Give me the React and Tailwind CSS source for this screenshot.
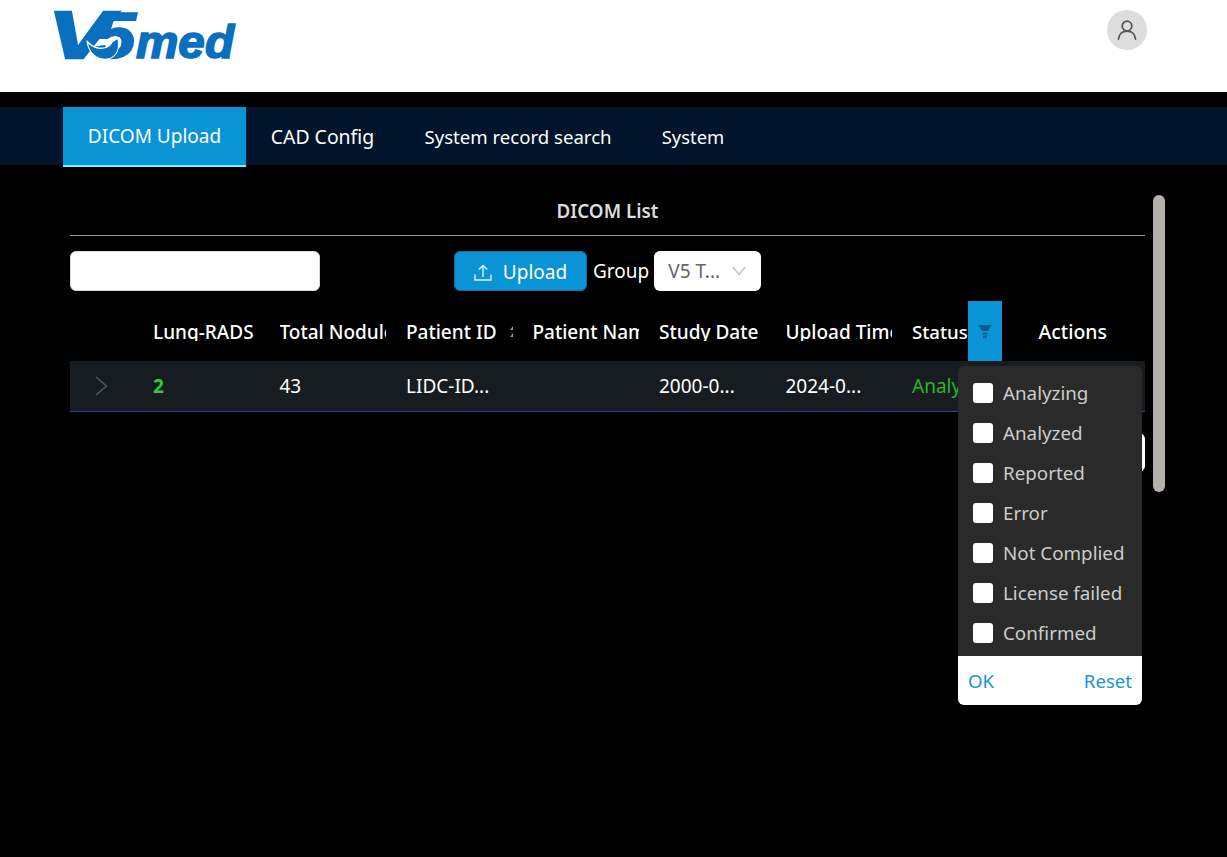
import React from 'react';

const FONT = "font-['Noto_Sans','Open_Sans',sans-serif]";

const columns = [
  { title: 'Lung-RADS' },
  { title: 'Total Nodule Count' },
  { title: 'Patient ID', sorter: true },
  { title: 'Patient Name' },
  { title: 'Study Date' },
  { title: 'Upload Time' },
];

const statusOptions = ['Analyzing', 'Analyzed', 'Reported', 'Error', 'Not Complied', 'License failed', 'Confirmed'];

function Logo() {
  return (
    <svg width="190" height="56" viewBox="0 0 190 56" className="block overflow-visible" aria-label="V5med">
      <g fill="#0a6fbe" stroke="#0a6fbe" fontFamily="Liberation Sans" fontWeight="700" fontStyle="italic">
        <text x="-4" y="48" fontSize="66" strokeWidth="2.5" textLength="64" lengthAdjust="spacingAndGlyphs">V</text>
        <text x="41" y="48" fontSize="64" strokeWidth="1.5" textLength="43" lengthAdjust="spacingAndGlyphs">5</text>
        <text x="84" y="48" fontSize="46" strokeWidth="1.6" textLength="98" lengthAdjust="spacingAndGlyphs">med</text>
      </g>
      <path d="M35 31 C37 45 47 51 57 49 C65 46 68 38 66 28 L60 32 C58 37 52 39 46 38 C41 37 38 35 35 31Z" fill="#0a6fbe" stroke="#fff" strokeWidth="1.3" />
    </svg>
  );
}

function Avatar() {
  return (
    <div className="w-10 h-10 rounded-full bg-[#dddddd] flex items-center justify-center">
      <svg width="22" height="22" viewBox="0 0 22 22" fill="none" stroke="#555555" strokeWidth="1.8" strokeLinecap="round">
        <circle cx="11" cy="7" r="4.8" />
        <path d="M2.5 20 C3 15 6.5 12 11 12 C15.5 12 19 15 19.5 20" />
      </svg>
    </div>
  );
}

function FilterIcon() {
  return (
    <svg width="14" height="13" viewBox="0 0 14 13" fill="#0d5f8f">
      <path d="M0 0H14L10 6H4Z" />
      <path d="M4.5 7.5H9.5V9.5H4.5Z" />
      <path d="M5 10.5H9V13H5Z" />
    </svg>
  );
}

function UploadIcon() {
  return (
    <svg width="18" height="17" viewBox="0 0 18 17" fill="none" stroke="#dff3fb" strokeWidth="1.4">
      <path d="M1 10.5V16H17V10.5" />
      <path d="M9 13V1.5M4.8 5.6L9 1.4L13.2 5.6" />
    </svg>
  );
}

function HeaderCell({ title, sorter }) {
  return (
    <div className="w-[126.5px] shrink-0 px-[10px] flex items-center">
      <div className="flex-1 h-[20px] overflow-hidden whitespace-nowrap font-medium text-white text-[19px] leading-[23px] relative">
        {sorter ? (
          <>
            {title}
            <svg width="4" height="11" viewBox="0 0 4 11" fill="#999999" className="absolute right-0 top-[5px]">
              <path d="M4 0V4H1Z" />
              <path d="M4 7V11H1Z" />
            </svg>
          </>
        ) : (
          title
        )}
      </div>
    </div>
  );
}

function FilterMenu() {
  return (
    <div className="absolute left-[958px] top-[366px] w-[184px] rounded-md overflow-hidden z-10">
      <div className="bg-[#2a2a2a] h-[290px] pt-[7px]">
        {statusOptions.map((label) => (
          <div key={label} className="h-10 flex items-center pl-[15px] gap-[10px]">
            <span className="w-5 h-5 rounded-[3px] bg-white" />
            <span className="text-[#cccccc] text-[18.8px]">{label}</span>
          </div>
        ))}
      </div>
      <div className="bg-white h-[49px] px-[10px] flex items-center justify-between text-[#1a94d8] text-[18.6px]">
        <span>OK</span>
        <span>Reset</span>
      </div>
    </div>
  );
}

export default function App() {
  return (
    <div className={`relative w-full h-[857px] bg-black overflow-hidden ${FONT}`}>
      <header className="h-[92px] bg-white pl-[52px] pr-[80px] pt-[10px] flex justify-between items-start">
        <Logo />
        <Avatar />
      </header>

      <nav className="mt-[15px] h-[58px] bg-[#00152b] pl-[63px] flex items-start text-white">
        <a className="w-[183px] h-[60px] flex items-center justify-center text-[19px] bg-[#0a94d6] border-b-2 border-[#7ff0f8]">DICOM Upload</a>
        <a className="w-[153px] h-[60px] flex items-center justify-center text-[19.4px]">CAD Config</a>
        <a className="w-[238px] h-[60px] flex items-center justify-center text-[18.6px]">System record search</a>
        <a className="w-[112px] h-[60px] flex items-center justify-center text-[18.4px]">System</a>
      </nav>

      <div className="pl-[70px] pt-[30px] flex items-start">
        <main className="w-[1075px]">
          <h2 className="h-[41px] border-b border-[#999999] text-center text-[#dddddd] font-semibold text-[18.8px] leading-[32px]">DICOM List</h2>

          <div className="mt-[15px] flex items-center h-10">
            <input className="w-[250px] h-10 rounded-md bg-white border border-[#d9d9d9]" />
            <button className="ml-[134px] w-[133px] h-10 rounded-md bg-[#0a94d6] border border-[#17699a] text-white text-[19px] flex items-center justify-center gap-[11px] pt-[2px]">
              <UploadIcon />
              Upload
            </button>
            <span className="ml-[6px] text-white text-[19px]">Group</span>
            <div className="ml-[5px] w-[107px] h-10 rounded-md bg-white text-[#666666] text-[19px] flex items-center justify-between pl-[14px] pr-[15px]">
              <span>V5 T...</span>
              <svg width="14" height="10" viewBox="0 0 14 10" fill="none" stroke="#bbbbbb" strokeWidth="1.2">
                <path d="M0.7 1L7 8.5L13.3 1" />
              </svg>
            </div>
          </div>

          <div className="mt-[10px] h-[60px] flex">
            <div className="w-[73px] shrink-0" />
            {columns.map((c) => (
              <HeaderCell key={c.title} title={c.title} sorter={c.sorter} />
            ))}
            <div className="w-[126.5px] shrink-0 pl-[10px] flex items-center">
              <span className="font-medium text-white text-[18.6px] pt-[2px]">Status</span>
              <div className="ml-auto w-[35px] h-full bg-[#0a94d6] flex items-center justify-center mr-[27px]">
                <FilterIcon />
              </div>
            </div>
            <div className="flex-1 pl-[10px] pt-[2px] flex items-center font-medium text-white text-[19.4px]">Actions</div>
          </div>

          <div className="h-[51px] bg-[#161c20] border-b border-[#3c3f8f] flex items-center text-white text-[19px]">
            <div className="w-[73px] shrink-0 pl-[25px]">
              <svg width="13" height="20" viewBox="0 0 13 20" fill="none" stroke="#555555" strokeWidth="1.6">
                <path d="M1 1L11.5 10L1 19" />
              </svg>
            </div>
            <div className="w-[126.5px] shrink-0 px-[10px] font-bold text-[#2ecc40]">2</div>
            <div className="w-[126.5px] shrink-0 px-[10px]">43</div>
            <div className="w-[126.5px] shrink-0 px-[10px]">LIDC-ID...</div>
            <div className="w-[126.5px] shrink-0 px-[10px]" />
            <div className="w-[126.5px] shrink-0 px-[10px]">2000-0...</div>
            <div className="w-[126.5px] shrink-0 px-[10px]">2024-0...</div>
            <div className="w-[126.5px] shrink-0 px-[10px] text-[#2bb52b]">Analyzed</div>
          </div>

          <div className="mt-[21px] flex justify-end">
            <div className="w-10 h-[39px] rounded-md bg-white" />
          </div>
        </main>

        <div className="ml-[8px] w-3 h-[297px] rounded-md bg-[#b5b1aa]" />
      </div>

      <FilterMenu />
    </div>
  );
}
